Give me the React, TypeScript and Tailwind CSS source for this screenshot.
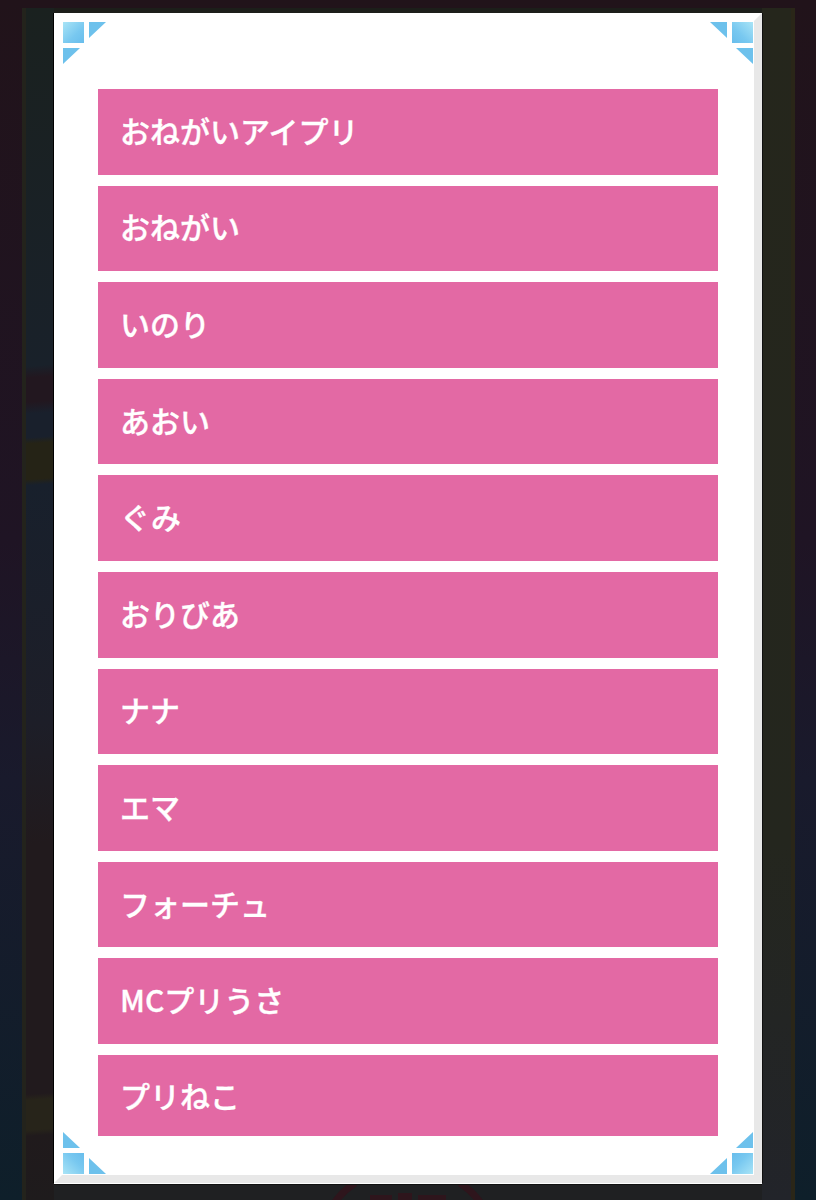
const rows = ["おねがいアイプリ","おねがい","いのり","あおい","ぐみ","おりびあ","ナナ","エマ","フォーチュ","MCプリうさ"];

function Corner({ id, flip }: { id: string; flip: string }) {
  return (
    <svg width="44" height="44" viewBox="0 0 44 44" className={flip}>
      <defs>
        <linearGradient id={id} x1="0" y1="0" x2="1" y2="1">
          <stop offset="0" stopColor="#a9e4f6" />
          <stop offset="0.6" stopColor="#78c8f0" />
          <stop offset="1" stopColor="#68bdec" />
        </linearGradient>
      </defs>
      <rect x="1" y="1" width="21" height="21" fill={`url(#${id})`} />
      <polygon points="27,1 44,1 27,17" fill="#6dc1ec" />
      <polygon points="1,27 18,27 1,43" fill="#6dc1ec" />
    </svg>
  );
}

const rowText = "flex items-center bg-[#e369a4] pl-[22px] text-[30px] font-medium leading-none text-white [-webkit-text-stroke:0.35px_#ffffff]";

export default function App() {
  return (
    <div className="flex h-[1200px] w-[816px] flex-col overflow-hidden bg-[linear-gradient(180deg,#21131a_0%,#1f1424_45%,#191a2c_65%,#0e1f2a_100%)] pl-[22px] pt-[8px] font-['Noto_Sans_CJK_JP','Noto_Sans',sans-serif]">
      <div className="flex h-[1192px] w-[773px]">
        <div className="h-full w-[32px] border-l-[4px] border-[#23231c] bg-[linear-gradient(176deg,#1a211f_0%,#19212a_30%,#22171f_31%,#22171f_33%,#19202c_34%,#19202c_36%,#252316_36.5%,#252316_39.5%,#18202c_40%,#1d1e28_60%,#211a1d_70%,#211a1d_91%,#27241a_91.5%,#27241a_94%,#201a1c_94.5%,#1e1b1c_100%)]"></div>
        <div className="h-full w-[708px] bg-[#1c1e1a] pt-[5px]">
          <div className="relative h-[1170px] w-[708px] border-8 border-t-white border-l-white border-r-[#e8e8e8] border-b-[#e8e8e8] bg-white px-[36px] pt-[68px] shadow-[-1px_0_0_#000,0_1px_0_#fff,0_2px_0_#111,1px_0_0_#111]">
            <div className="absolute left-0 top-0"><Corner id="c1" flip="" /></div>
            <div className="absolute right-0 top-0"><Corner id="c2" flip="-scale-x-100" /></div>
            <div className="absolute bottom-0 left-0"><Corner id="c3" flip="-scale-y-100" /></div>
            <div className="absolute bottom-0 right-0"><Corner id="c4" flip="-scale-100" /></div>
            <div className="flex flex-col gap-[11px]">
              {rows.map((r) => (
                <div key={r} className={`${rowText} h-[85.6px] pb-[4px]`}>{r}</div>
              ))}
              <div className={`${rowText} h-[81px]`}>プリねこ</div>
            </div>
          </div>
          <svg width="708" height="17" viewBox="0 0 708 17" className="bg-[#1f2022]">
            <g fill="none" stroke="#2e151c" strokeWidth="7">
              <path d="M281 19 Q 289 8 301 0" />
              <path d="M426 19 Q 418 8 406 0" />
            </g>
            <g fill="#2e151c">
              <rect x="316" y="12" width="22" height="5" />
              <rect x="344" y="10" width="14" height="7" />
              <rect x="364" y="12" width="28" height="5" />
            </g>
          </svg>
        </div>
        <div className="h-full w-[33px] border-r-[4px] border-[#2a2618] bg-[linear-gradient(180deg,#25261c_0%,#24261e_70%,#22242a_100%)]"></div>
      </div>
    </div>
  );
}
